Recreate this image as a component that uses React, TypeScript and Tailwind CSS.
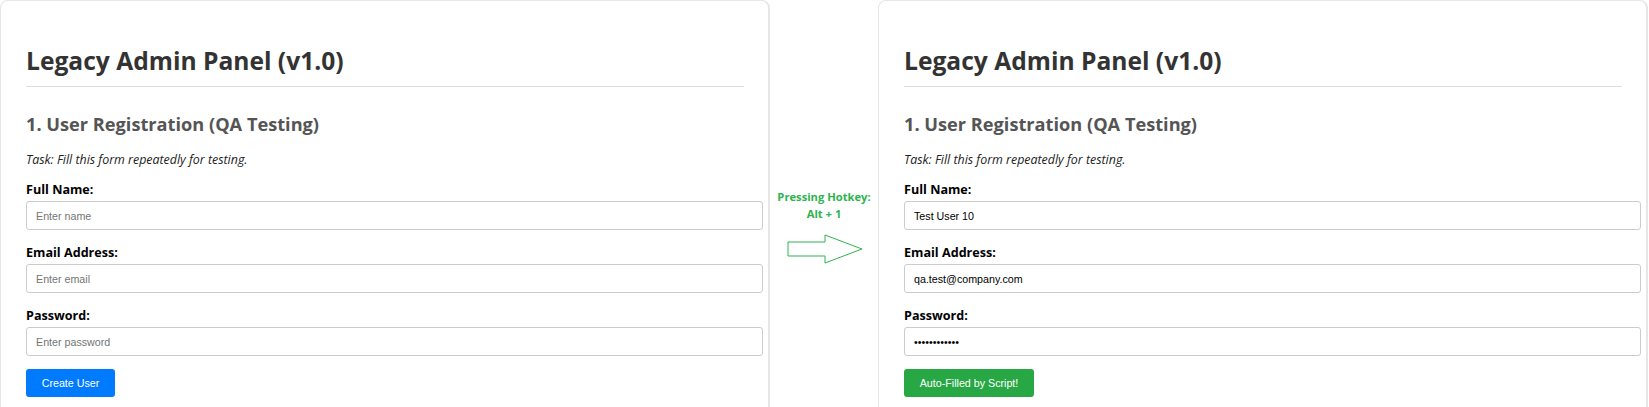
import React from 'react';

const sans = { fontFamily: '"Open Sans", "Noto Sans", sans-serif' };

interface FieldProps {
  label: string;
  placeholder: string;
  value?: string;
  type?: string;
  first?: boolean;
}

const Field = ({ label, placeholder, value, type = 'text', first }: FieldProps) => (
  <div className={first ? 'mt-[12px]' : 'mt-[14px]'}>
    <label className="block text-[12.6px] leading-[18px] font-bold text-black">{label}</label>
    <input
      type={type}
      readOnly
      placeholder={placeholder}
      defaultValue={value}
      className="mt-[2px] block w-[737px] h-[29px] px-[9px] border border-[#cccccc] rounded-[3px] bg-white text-[10.7px] text-black placeholder:text-[#757575] outline-none"
      style={{ fontFamily: '"Liberation Sans", Arial, sans-serif' }}
    />
  </div>
);

interface PanelProps {
  filled?: boolean;
}

const Panel = ({ filled }: PanelProps) => (
  <div
    className="w-[770px] shrink-0 h-[440px] bg-white border border-[#e6e6e6] border-r-2 rounded-[8px] pl-[25px] pr-[24px] pt-[44px]"
    style={sans}
  >
    <h1 className="text-[24.6px] leading-[32px] font-bold text-[#333333]">Legacy Admin Panel (v1.0)</h1>
    <div className="mt-[9px] h-px bg-[#dddddd]" />
    <h2 className="mt-[25px] text-[18.2px] leading-[24px] font-bold text-[#555555]">
      1. User Registration (QA Testing)
    </h2>
    <p className="mt-[15px] text-[12.4px] leading-[18px] italic text-[#222222]">
      Task: Fill this form repeatedly for testing.
    </p>
    <Field first label="Full Name:" placeholder="Enter name" value={filled ? 'Test User 10' : undefined} />
    <Field label="Email Address:" placeholder="Enter email" value={filled ? 'qa.test@company.com' : undefined} />
    <Field
      label="Password:"
      placeholder="Enter password"
      type="password"
      value={filled ? 'password1234' : undefined}
    />
    <button
      type="button"
      className={
        filled
          ? 'mt-[13px] h-[28px] w-[130px] rounded-[3px] bg-[#28a745] text-white text-[10.7px]'
          : 'mt-[13px] h-[28px] w-[89px] rounded-[3px] bg-[#007bff] text-white text-[10.7px]'
      }
      style={{ fontFamily: '"Liberation Sans", Arial, sans-serif' }}
    >
      {filled ? 'Auto-Filled by Script!' : 'Create User'}
    </button>
  </div>
);

export default function App() {
  return (
    <div className="flex w-[1649px] h-[407px] overflow-hidden bg-white">
      <Panel />
      <div className="w-[108px] shrink-0 flex flex-col items-center pt-[188px]" style={sans}>
        <div className="text-[11.2px] leading-[17px] font-bold text-[#2fb350] text-center">
          Pressing Hotkey:
          <br />
          Alt + 1
        </div>
        <svg width="76" height="30" viewBox="0 0 76 30" className="mt-[12px] ml-[2px]">
          <path
            d="M1 8 H38 V1 L75 15 L38 29 V22 H1 Z"
            fill="white"
            stroke="#2fb350"
            strokeWidth="1"
          />
        </svg>
      </div>
      <Panel filled />
    </div>
  );
}
